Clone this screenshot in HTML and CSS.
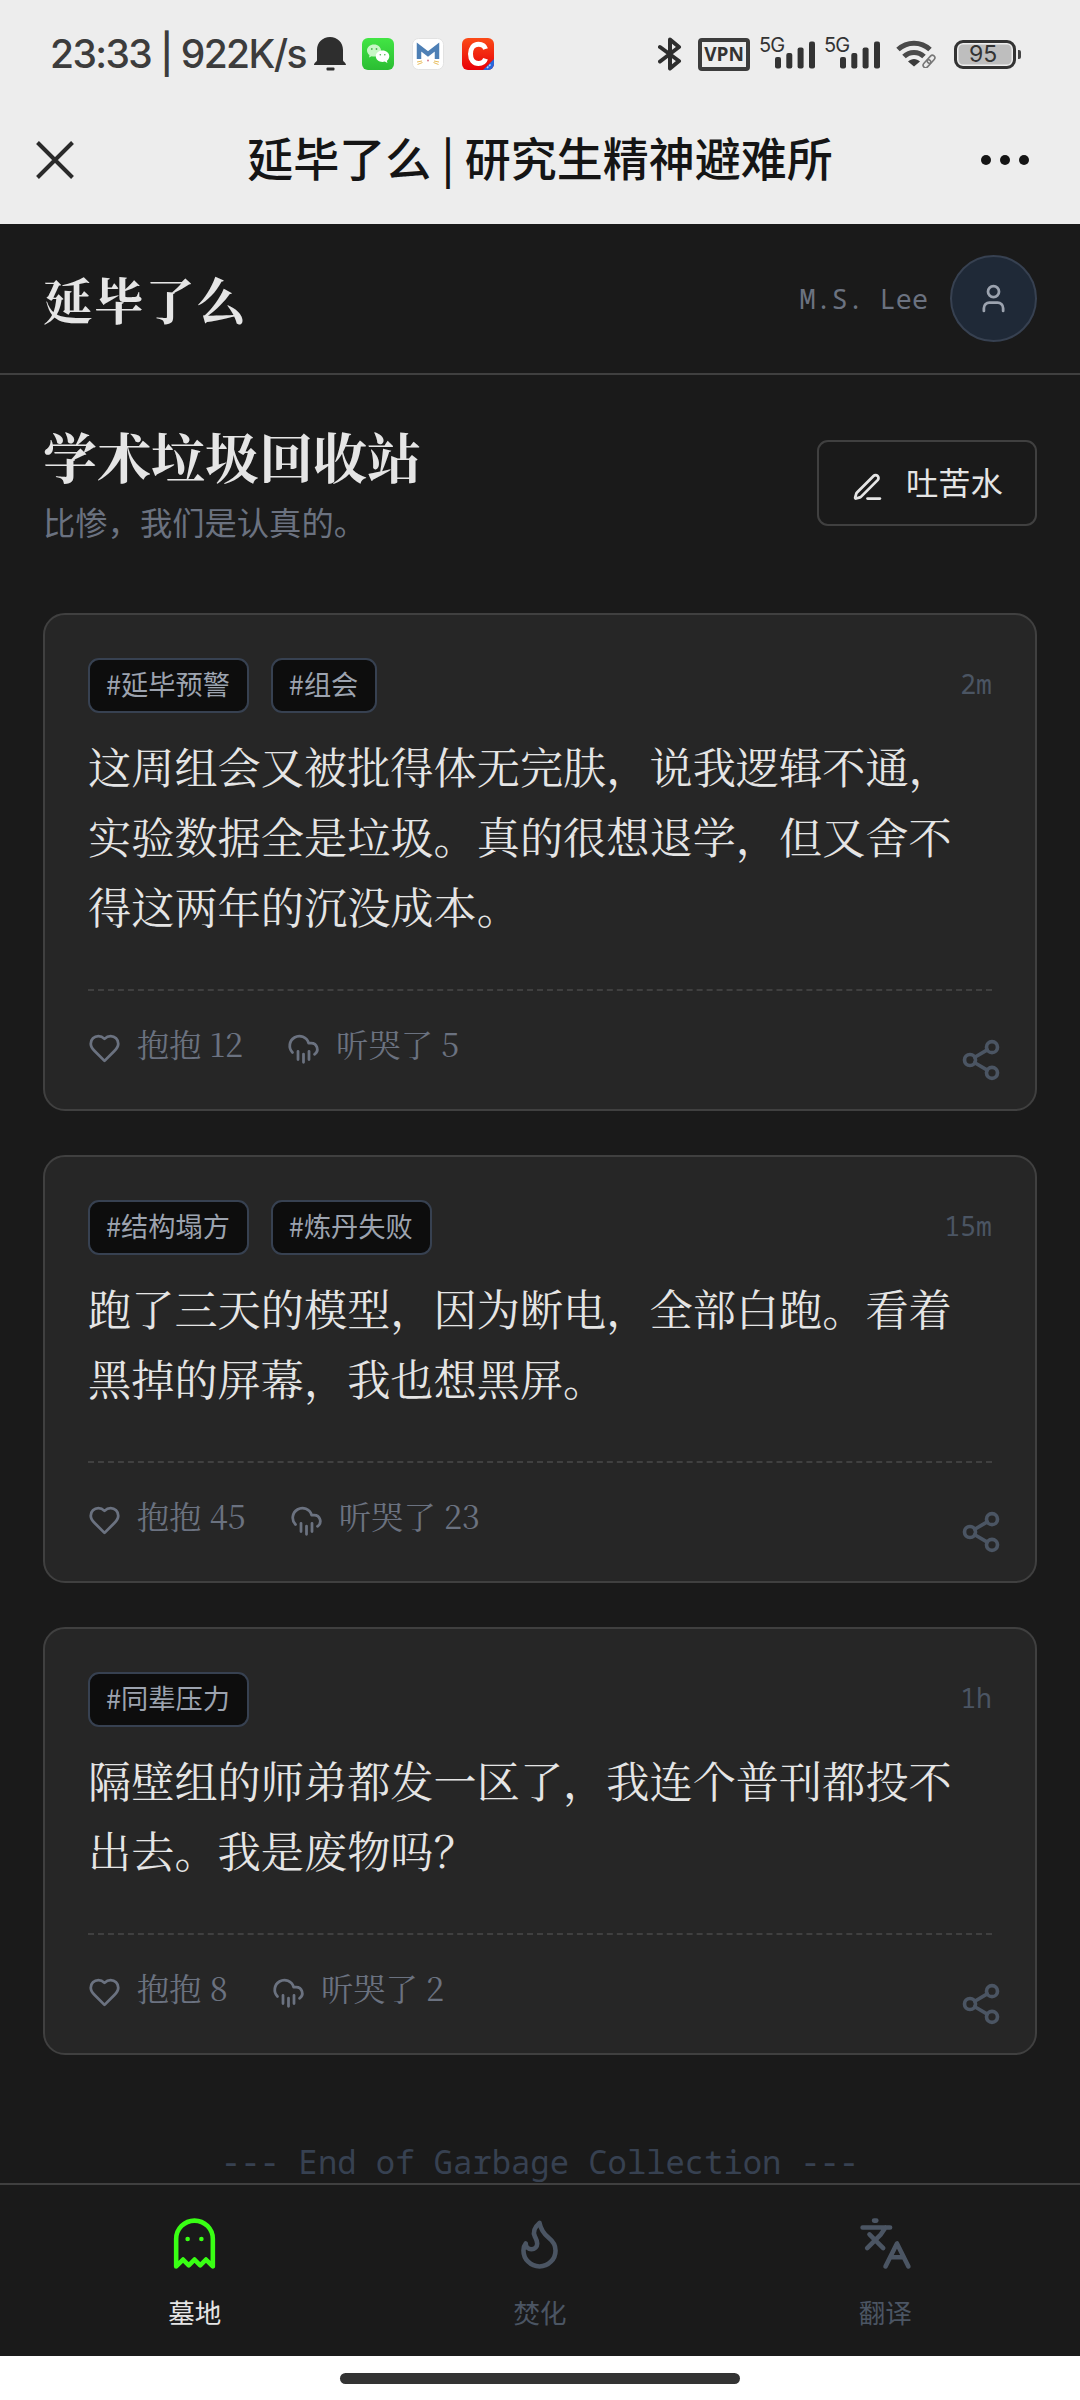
FILE: index.html
```html
<!DOCTYPE html>
<html lang="zh-CN">
<head>
<meta charset="utf-8">
<title>延毕了么 | 研究生精神避难所</title>
<link rel="stylesheet" href="styles.css">
</head>
<body>
<svg class="sprite" width="0" height="0" aria-hidden="true">
  <symbol id="heart" viewBox="0 0 24 24"><path d="M19 14c1.49-1.46 3-3.21 3-5.5A5.5 5.5 0 0 0 16.5 3c-1.76 0-3 .5-4.5 2-1.5-1.5-2.74-2-4.5-2A5.5 5.5 0 0 0 2 8.5c0 2.3 1.5 4.05 3 5.5l7 7Z"/></symbol>
  <symbol id="rain" viewBox="0 0 24 24"><path d="M4 14.899A7 7 0 1 1 15.71 8h1.79a4.5 4.5 0 0 1 2.5 8.242M16 14v6M8 14v6M12 16v6"/></symbol>
  <symbol id="share" viewBox="0 0 24 24"><circle cx="18" cy="5" r="3"/><circle cx="6" cy="12" r="3"/><circle cx="18" cy="19" r="3"/><path d="M8.59 13.51l6.83 3.98M15.41 6.51l-6.82 3.98"/></symbol>
  <symbol id="bars" viewBox="0 0 40 28"><rect x="0" y="16" width="6" height="11.500" rx="2"/><rect x="11.300" y="12" width="6" height="15.500" rx="2"/><rect x="22.600" y="6.500" width="6" height="21" rx="2"/><rect x="34" y="0.500" width="6" height="27" rx="2"/></symbol>
</svg>

<div class="status">
  <span class="clock">23:33 | 922K/s</span>
  <svg class="bell" viewBox="0 0 32 34"><path d="M16 0C8.500 0 3 5.500 3 13v10c0 2-3 2.500-3 5h32c0-2.500-3-3-3-5V13C29 5.500 23.500 0 16 0z"/><rect x="12.500" y="30.500" width="8" height="3" rx="1"/></svg>
  <svg class="app" viewBox="0 0 32 32"><defs><linearGradient id="g" x1="0" y1="0" x2="0" y2="1"><stop offset="0" stop-color="#42e544"/><stop offset="1" stop-color="#2bbd33"/></linearGradient></defs><rect width="32" height="32" rx="6" fill="url(#g)"/><path d="M12 6.500c-4 0-7 2.700-7 6 0 1.900 1 3.500 2.500 4.600L7 19.500l2.700-1.300c.8.200 1.500.3 2.300.3 4 0 7-2.700 7-6s-3-6-7-6z" fill="#c8f7c6"/><path d="M20.500 12.500c-3.800 0-6.700 2.500-6.700 5.700s2.900 5.700 6.700 5.700c.8 0 1.600-.1 2.300-.3l2.600 1.400-.5-2.300c1.500-1 2.400-2.700 2.400-4.500 0-3.200-3-5.700-6.800-5.700z" fill="#fff"/><g fill="#49b84b"><circle cx="9.800" cy="11" r=".9"/><circle cx="14.500" cy="11" r=".9"/><circle cx="18.300" cy="16.800" r=".8"/><circle cx="22.800" cy="16.800" r=".8"/></g></svg>
  <svg class="app" viewBox="0 0 32 32"><rect x=".5" y=".5" width="31" height="31" rx="6" fill="#fff" stroke="#e2e2e2"/><path d="M7 21V9l9 7 9-7v12" fill="none" stroke="#4d7fb5" stroke-width="4.500"/><path d="M5 24l5-1M5.500 26.500l5-2M27 24l-5-1M26.500 26.500l-5-2" stroke="#e8bd5d" stroke-width="1"/><circle cx="16" cy="22.500" r="1" fill="#d87c8e"/></svg>
  <svg class="app" viewBox="0 0 32 32"><defs><linearGradient id="r" x1="0" y1="0" x2="0" y2="1"><stop offset="0" stop-color="#fb4b18"/><stop offset="1" stop-color="#e80008"/></linearGradient><clipPath id="k"><rect width="32" height="32" rx="6"/></clipPath></defs><g clip-path="url(#k)"><rect width="32" height="32" fill="url(#r)"/><path d="M23.500 11c-1-3.500-3.500-4.700-7-4.700-5 0-8 4-8 9.700s3 9.500 8 9.500c3.500 0 6-1.500 7-4.700" fill="none" stroke="#fff" stroke-width="5"/><path d="M32 21v11H21z" fill="#2867dc"/><path d="M25 30l4-4" stroke="#b6d0ff" stroke-width="1.500" stroke-dasharray="2 1"/></g></svg>
  <span class="grow"></span>
  <svg class="bt" viewBox="0 0 24 34"><path d="M2 10l19 14-9 7.500V2.500l9 7.500L2 24.500" fill="none" stroke="#2e2e2e" stroke-width="4" stroke-linejoin="round" stroke-linecap="round"/></svg>
  <span class="vpn">VPN</span>
  <span class="cell"><span>5G</span><svg><use href="#bars"/></svg></span>
  <span class="cell second"><span>5G</span><svg><use href="#bars"/></svg></span>
  <svg class="wifi" viewBox="0 0 40 28"><g fill="none" stroke="#4a4a4a" stroke-width="5"><path d="M2 9.500C11 1 25 1 34 9.500"/><path d="M8 16.500c5.500-5.500 14.500-5.500 20 0"/></g><path d="M12 21.500c3.500-3.500 8.500-3.500 12 0L18 26.500z" fill="#3c3c3c"/><g fill="none" stroke="#777" stroke-width="1.600" transform="rotate(-48 33 21.500)"><rect x="25.500" y="19" width="9" height="5" rx="2.500"/><rect x="31.500" y="19" width="9" height="5" rx="2.500"/></g></svg>
  <span class="battery">95</span><span class="tip"></span>
</div>

<div class="titlebar">
  <svg class="close" viewBox="0 0 38 38"><path d="M1.500 1.500l35 35M36.500 1.500l-35 35"/></svg>
  <span class="wintitle">延毕了么 | 研究生精神避难所</span>
  <svg class="more" viewBox="0 0 50 12"><circle cx="6" cy="6" r="5"/><circle cx="25" cy="6" r="5"/><circle cx="44" cy="6" r="5"/></svg>
</div>

<header class="top">
  <span class="brand">延毕了么</span>
  <span class="mono user">M.S. Lee</span>
  <span class="avatar"><svg class="ico" viewBox="0 0 24 24"><path d="M19 21v-2a4 4 0 0 0-4-4H9a4 4 0 0 0-4 4v2"/><circle cx="12" cy="7" r="4"/></svg></span>
</header>

<main>
  <section class="intro">
    <div>
      <h1>学术垃圾回收站</h1>
      <p class="sub">比惨，我们是认真的。</p>
    </div>
    <button class="vent"><svg class="ico" viewBox="0 0 24 24"><path d="M12 20h9"/><path d="M16.376 3.622a1 1 0 0 1 3.002 3.002L7.368 18.635a2 2 0 0 1-.855.506l-2.872.838a.5.5 0 0 1-.62-.62l.838-2.872a2 2 0 0 1 .506-.854z"/></svg><span>吐苦水</span></button>
  </section>

  <article class="card">
    <div class="meta"><span class="tag">#延毕预警</span><span class="tag">#组会</span><time class="mono">2m</time></div>
    <p class="body">这周组会又被批得体无完肤，说我逻辑不通，实验数据全是垃圾。真的很想退学，但又舍不得这两年的沉没成本。</p>
    <div class="acts"><svg class="ico"><use href="#heart"/></svg><span class="act">抱抱 12</span><svg class="ico next"><use href="#rain"/></svg><span class="act">听哭了 5</span><svg class="share"><use href="#share"/></svg></div>
  </article>

  <article class="card">
    <div class="meta"><span class="tag">#结构塌方</span><span class="tag">#炼丹失败</span><time class="mono">15m</time></div>
    <p class="body">跑了三天的模型，因为断电，全部白跑。看着黑掉的屏幕，我也想黑屏。</p>
    <div class="acts"><svg class="ico"><use href="#heart"/></svg><span class="act">抱抱 45</span><svg class="ico next"><use href="#rain"/></svg><span class="act">听哭了 23</span><svg class="share"><use href="#share"/></svg></div>
  </article>

  <article class="card">
    <div class="meta"><span class="tag">#同辈压力</span><time class="mono">1h</time></div>
    <p class="body">隔壁组的师弟都发一区了，我连个普刊都投不出去。我是废物吗？</p>
    <div class="acts"><svg class="ico"><use href="#heart"/></svg><span class="act">抱抱 8</span><svg class="ico next"><use href="#rain"/></svg><span class="act">听哭了 2</span><svg class="share"><use href="#share"/></svg></div>
  </article>

  <p class="mono end">--- End of Garbage Collection ---</p>
</main>

<nav>
  <a class="on"><svg viewBox="0 0 24 24"><path d="M9 10h.01M15 10h.01M12 2a8 8 0 0 0-8 8v12l3-3 2.500 2.500L12 19l2.500 2.500L17 19l3 3V10a8 8 0 0 0-8-8z"/></svg><span>墓地</span></a>
  <a><svg viewBox="0 0 24 24"><path d="M8.500 14.500A2.500 2.500 0 0 0 11 12c0-1.380-.5-2-1-3-1.072-2.143-.224-4.054 2-6 .5 2.500 2 4.900 4 6.500 2 1.600 3 3.500 3 5.500a7 7 0 1 1-14 0c0-1.153.433-2.294 1-3a2.500 2.500 0 0 0 2.500 2.500z"/></svg><span>焚化</span></a>
  <a><svg viewBox="0 0 24 24"><path d="M5 8l6 6M4 14l6-6 2-3M2 5h12M7 2h1M22 22l-5-10-5 10M14 18h6"/></svg><span>翻译</span></a>
</nav>
<div class="gesture"><span></span></div>
</body>
</html>
```

FILE: styles.css
```css
* { box-sizing: border-box; }
body {
  margin: 0;
  width: 1080px;
  height: 2400px;
  display: flex;
  flex-direction: column;
  overflow: hidden;
  background: #1a1a1a;
  color: #e5e5e5;
  font-family: "Noto Sans CJK SC", sans-serif;
}
.sprite { display: none; }
h1, p { margin: 0; }
svg { display: block; flex: none; }

/* system status bar */
.status {
  height: 108px;
  flex: none;
  display: flex;
  align-items: center;
  padding: 0 59px 0 50px;
  background: #ededed;
  color: #333;
  font-family: "Noto Sans", sans-serif;
}
.clock { width: 264px; font: 500 39px/50px Inter, sans-serif; letter-spacing: -1.6px; white-space: nowrap; color: #3c3c3c; }
.bell { width: 32px; height: 34px; fill: #2e2e2e; }
.app { width: 32px; height: 32px; margin-left: 18px; }
.bell + .app { margin-left: 16px; }
.grow { flex: 1; }
.bt { width: 24px; height: 34px; margin-right: 16px; }
.vpn {
  width: 52px; height: 33px; margin-right: 9px;
  border: 4px solid #3c3c3c; border-radius: 4px;
  font: 700 19px/25px "Open Sans", sans-serif; text-align: center;
}
.cell { display: flex; width: 56px; height: 34px; margin-right: 9px; }
.cell span { width: 16px; flex: none; font: 400 20px/16px Inter, sans-serif; letter-spacing: -0.8px; }
.cell svg { width: 40px; height: 28px; margin-top: 4px; fill: #333; }
.cell.second { margin-right: 16px; }
.wifi { width: 40px; height: 28px; margin-right: 18px; }
.battery {
  width: 62px; height: 29px;
  border: 3px solid #333; border-radius: 9px;
  background: #bebebe; box-shadow: inset 0 0 0 1.500px #ededed;
  font: 400 23px/23px Inter, sans-serif; text-align: center; padding-right: 4px;
}
.tip { width: 3px; height: 9px; margin-left: 2px; background: #444; border-radius: 0 2px 2px 0; }

/* web view title bar */
.titlebar {
  height: 116px;
  flex: none;
  display: flex;
  align-items: center;
  justify-content: space-between;
  padding: 0 50px 12px 36px;
  background: #ededed;
  color: #151515;
}
.close { width: 38px; height: 38px; margin-right: 26px; stroke: #2a2a2a; stroke-width: 4; fill: none; }
.wintitle { font-size: 46px; font-weight: 500; line-height: 60px; padding-bottom: 8px; white-space: nowrap; }
.more { width: 50px; height: 12px; fill: #151515; }

/* app header */
.mono { font-family: "Noto Sans Mono", "DejaVu Sans Mono", monospace; }
.top {
  height: 151px;
  flex: none;
  display: flex;
  align-items: center;
  padding: 0 43px;
  border-bottom: 2px solid #404040;
}
.brand {
  flex: 1;
  font: 700 49.500px/60px "Noto Serif CJK SC", "Noto Sans CJK SC", serif;
  letter-spacing: 1.600px;
}
.user { font-size: 26.800px; color: #6b7280; margin-right: 22px; }
.avatar {
  width: 87px; height: 87px;
  display: grid; place-items: center;
  border: 2px solid #374151; border-radius: 50%;
  background: #1f2937; color: #9ca3af;
}
.ico, .share, nav svg { fill: none; stroke: currentColor; stroke-width: 2; stroke-linecap: round; stroke-linejoin: round; }
.ico { width: 33px; height: 33px; }

main { height: 1808px; flex: none; overflow: hidden; padding: 44px 43px 0; }
.intro { height: 128px; margin-bottom: 66px; display: flex; justify-content: space-between; align-items: center; }
h1 { font: 700 54px/73px "Noto Serif CJK SC", "Noto Sans CJK SC", serif; }
.sub { margin: 6px 0 3px; font-size: 32.300px; line-height: 46px; color: #6b7280; }
.vent {
  width: 220px; height: 86px;
  display: flex; align-items: center;
  padding: 0 0 0 32px; gap: 22px;
  border: 2px solid #404040; border-radius: 11px;
  background: transparent; color: #e5e5e5;
  font: 400 32.300px/44px "Noto Sans CJK SC", sans-serif;
}
.vent svg { margin-top: 9px; }
.vent span { padding-bottom: 5px; }

/* posts */
.card {
  margin-bottom: 44px;
  padding: 43px 43px 0;
  border: 2px solid #404040; border-radius: 22px;
  background: #262626;
}
.meta { display: flex; height: 55px; gap: 22px; }
.tag {
  padding: 0 17px 0 16px;
  border: 2px solid #374151; border-radius: 11px;
  background: #0d0d0d; color: #9ca3af;
  font-size: 27.200px; line-height: 46px;
}
.meta time { margin-left: auto; font-size: 26.500px; line-height: 53px; color: #4b5563; }
.body {
  margin: 17px 0 48px;
  font: 400 43.200px/70.200px "Noto Serif CJK SC", "Noto Sans CJK SC", serif;
}
.acts {
  height: 120.600px;
  display: flex; align-items: flex-start;
  border-top: 2px dashed #404040;
  color: #6b7280;
}
.acts .ico { margin: 41px 16px 0 0; }
.acts .next { margin-left: 44px; }
.act { margin-top: 30px; font: 400 32.300px/44px "Noto Serif CJK SC", "Noto Sans CJK SC", serif; }
.share { width: 44px; height: 44px; margin: 47px -11px 0 auto; color: #4b5563; }
.end { margin-top: 85px; font-size: 32.200px; line-height: 44px; text-align: center; color: #374151; }

nav {
  height: 173px;
  flex: none;
  display: flex;
  padding: 31px 22px 0;
  border-top: 2px solid #404040;
  font-size: 26.500px; line-height: 38px;
}
nav a { flex: 1; display: flex; flex-direction: column; align-items: center; gap: 22px; color: #4b5563; }
nav svg { width: 55px; height: 55px; }
nav .on svg { color: #39ff14; }
nav .on { color: #e5e5e5; }
.gesture { flex: 1; background: #fff; display: flex; justify-content: center; padding-top: 17px; }
.gesture span { width: 400px; height: 11px; border-radius: 6px; background: #333; }
```
